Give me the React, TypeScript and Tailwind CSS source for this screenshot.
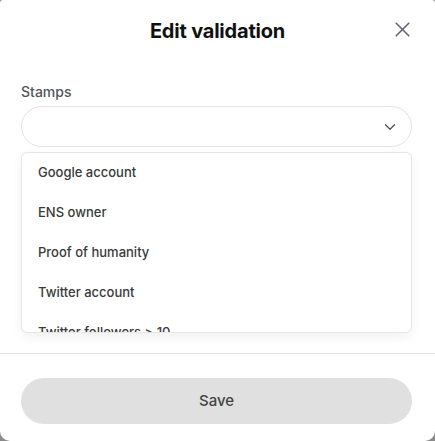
import { ChevronDown, X } from "lucide-react"

const stamps = [
  "Google account",
  "ENS owner",
  "Proof of humanity",
  "Twitter account",
  "Twitter followers > 10",
  "Twitter followers > 100",
]

export default function App() {
  return (
    <div className="h-[441px] w-[435px] overflow-hidden bg-[#8a8a8a] font-['Inter',sans-serif]">
      <div className="flex h-[441px] w-[435px] flex-col rounded-t-[3px] rounded-b-[10px] bg-white">
        {/* Header */}
        <div className="relative flex h-[60px] items-center justify-center pt-px">
          <h1 className="text-[20px] font-bold tracking-[-0.2px] text-[#111]">Edit validation</h1>
          <button className="absolute right-[20px] top-[17px] text-[#5f6670]">
            <X size={25} strokeWidth={1.6} />
          </button>
        </div>

        {/* Body */}
        <div className="relative pl-[21px] pr-[23px] pt-[21px]">
          <label className="block text-[14px] font-medium text-[#4f555c]">Stamps</label>
          <div className="mt-[4px] flex h-[41px] items-center justify-end rounded-full border border-[#e3e3e3] pr-[12px]">
            <ChevronDown size={18} strokeWidth={1.6} className="text-[#4a5059]" />
          </div>

          <div className="mt-[5px] h-[181px] overflow-hidden rounded-[6px] border border-[#e6e6e6] bg-white shadow-[0_4px_12px_rgba(0,0,0,0.06)]">
            {stamps.map((s) => (
              <div key={s} className="flex h-[40px] items-center px-[16px] text-[13px] font-medium text-[#3a3a3a]">
                {s}
              </div>
            ))}
          </div>
        </div>

        <div className="mt-[20px] border-t border-[#e5e5e5]" />

        <div className="pl-[21px] pr-[23px] pt-[24px]">
          <button className="flex h-[46px] w-full items-center justify-center rounded-full bg-[#e0e0e0] text-[15px] font-medium text-[#444]">
            Save
          </button>
        </div>
      </div>
    </div>
  )
}
